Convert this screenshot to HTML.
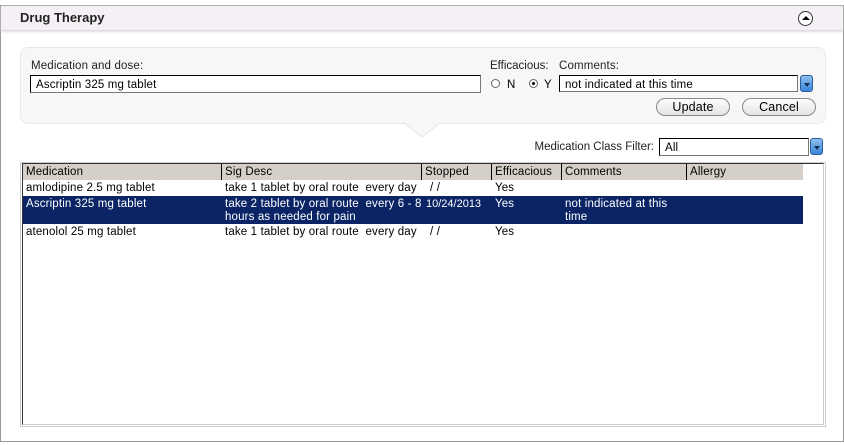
<!DOCTYPE html>
<html><head><meta charset="utf-8"><style>
*{box-sizing:border-box;margin:0;padding:0}
body{width:844px;height:445px;background:#fff;font-family:"Liberation Sans",sans-serif;font-size:11.5px;letter-spacing:0.15px;color:#000;position:relative;overflow:hidden}
.a{position:absolute}
.t{white-space:nowrap}
.inp{position:absolute;background:#fff;border:1px solid #000;border-right-color:#777;border-bottom-color:#777;padding:2px 0 0 5px;line-height:14px}
.dd{position:absolute;width:13px;height:17px;border-radius:3px;background:linear-gradient(#8fbff0,#3b84d8);border:1px solid #2a5e9e}
.dd:after{content:"";position:absolute;left:3px;top:7px;border-left:3px solid transparent;border-right:3px solid transparent;border-top:4px solid #103050}
.btn{position:absolute;height:18px;border:1px solid #888;border-radius:9px;background:linear-gradient(#fdfdfd,#e4e4e4);text-align:center;font-size:12.5px;line-height:16px}
.hd{position:absolute;top:164px;height:16px;background:#d4d0c8;border-right:1px solid #000;padding-left:3px;line-height:17px}
.c{position:absolute;padding-left:3px;line-height:13px}
.sel{color:#fff}
</style></head><body>
<div class="a" style="left:0;top:5px;width:844px;height:437px;border:1px solid #999;border-top-color:#aaa"></div>
<div class="a" style="left:1px;top:6px;width:842px;height:25px;background:#f5f0f5;border-bottom:1px solid #ddd;box-shadow:0 1px 2px #ddd"></div>
<div class="a t" style="left:20px;top:10px;font-size:13px;font-weight:bold;color:#222;letter-spacing:0">Drug Therapy</div>
<div class="a" style="left:798px;top:11px;width:15px;height:15px;border:1px solid #333;border-radius:50%;background:#fff"></div>
<div class="a" style="left:802px;top:16px;border-left:4px solid transparent;border-right:4px solid transparent;border-bottom:4px solid #000"></div>

<div class="a" style="left:20px;top:47px;width:806px;height:77px;background:#f7f7f7;border:1px solid #e8e8e8;border-radius:8px"></div>
<svg class="a" style="left:400px;top:122px" width="44" height="18"><polygon points="4,1 22,15 40,1" fill="#f7f7f7"/><polyline points="4,1 22,15 40,1" fill="none" stroke="#e6e6e6"/></svg>

<div class="a t" style="left:31px;top:60px;color:#222">Medication and dose:</div>
<div class="inp" style="left:30px;top:75px;width:451px;height:18px">Ascriptin 325 mg tablet</div>
<div class="a t" style="left:490px;top:60px;color:#222;letter-spacing:0">Efficacious:</div>
<div class="a t" style="left:559px;top:60px;color:#222">Comments:</div>
<div class="a" style="left:491px;top:79px;width:9px;height:9px;border:1px solid #666;border-radius:50%;background:#fff"></div>
<div class="a t" style="left:507px;top:79px">N</div>
<div class="a" style="left:529px;top:79px;width:9px;height:9px;border:1px solid #666;border-radius:50%;background:#fff"></div>
<div class="a" style="left:532px;top:82px;width:3px;height:3px;background:#000;border-radius:50%"></div>
<div class="a t" style="left:544px;top:79px">Y</div>
<div class="inp" style="left:559px;top:75px;width:239px;height:17px">not indicated at this time</div>
<div class="dd" style="left:800px;top:75px"></div>
<div class="btn" style="left:656px;top:98px;width:74px">Update</div>
<div class="btn" style="left:742px;top:98px;width:74px">Cancel</div>

<div class="a t" style="right:190px;top:141px;color:#222;letter-spacing:0">Medication Class Filter:</div>
<div class="inp" style="left:659px;top:138px;width:150px;height:18px">All</div>
<div class="dd" style="left:810px;top:138px"></div>

<div class="a" style="left:20px;top:162px;width:806px;height:265px;border:1px solid #ccc"></div>
<div class="a" style="left:22px;top:163px;width:802px;height:262px;border:1px solid #ccc;border-left:1px solid #333;border-top:1px solid #333;background:#fff"></div>
<div class="hd" style="left:23px;width:199px">Medication</div>
<div class="hd" style="left:222px;width:200px">Sig Desc</div>
<div class="hd" style="left:422px;width:70px">Stopped</div>
<div class="hd" style="left:492px;width:70px">Efficacious</div>
<div class="hd" style="left:562px;width:125px">Comments</div>
<div class="hd" style="left:687px;width:116px;border-right:none">Allergy</div>

<div class="c t" style="left:23px;top:182px">amlodipine 2.5 mg tablet</div>
<div class="c t" style="left:222px;top:182px">take 1 tablet by oral route &nbsp;every day</div>
<div class="c t" style="left:427px;top:182px">/ /</div>
<div class="c t" style="left:492px;top:182px">Yes</div>

<div class="a" style="left:23px;top:196px;width:780px;height:28px;background:#0a2466"></div>
<div class="c t sel" style="left:23px;top:198px">Ascriptin 325 mg tablet</div>
<div class="c sel" style="left:222px;top:198px;width:205px">take 2 tablet by oral route &nbsp;every 6 - 8 hours as needed for pain</div>
<div class="c t sel" style="left:423px;top:198px;letter-spacing:0;font-size:11px">10/24/2013</div>
<div class="c t sel" style="left:492px;top:198px">Yes</div>
<div class="c sel" style="left:562px;top:198px;width:125px">not indicated at this time</div>

<div class="c t" style="left:23px;top:226px">atenolol 25 mg tablet</div>
<div class="c t" style="left:222px;top:226px">take 1 tablet by oral route &nbsp;every day</div>
<div class="c t" style="left:427px;top:226px">/ /</div>
<div class="c t" style="left:492px;top:226px">Yes</div>
</body></html>
